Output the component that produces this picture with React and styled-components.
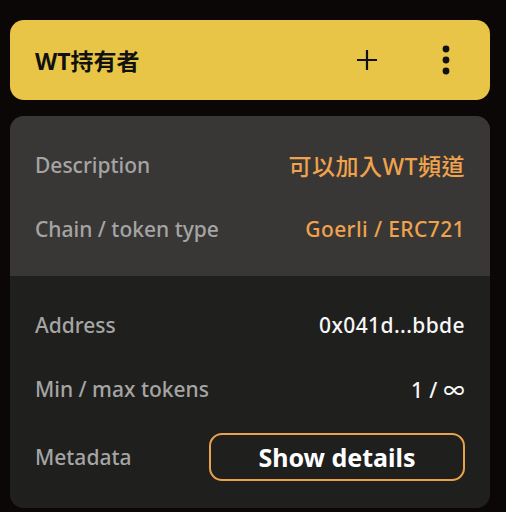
import React from 'react';
import styled, { createGlobalStyle } from 'styled-components';

const GlobalStyle = createGlobalStyle`
  html, body {
    margin: 0;
    padding: 0;
    background: #0a0706;
  }
  body {
    font-family: "Noto Sans", "Noto Sans CJK TC", sans-serif;
  }
`;

const Page = styled.div`
  width: 506px;
  height: 512px;
  padding: 20px 16px 0 10px;
  box-sizing: border-box;
  display: flex;
  flex-direction: column;
  gap: 16px;
`;

const Header = styled.div`
  height: 80px;
  background: #e8c546;
  border-radius: 14px;
  display: flex;
  align-items: center;
  padding: 0 38px 0 25px;
`;

const Title = styled.h1`
  flex: 1;
  margin: 0;
  font-size: 23px;
  font-weight: 700;
  color: #111;
  font-family: "Noto Sans", "Noto Sans CJK TC", sans-serif;
`;

const IconButton = styled.button`
  border: 0;
  background: none;
  padding: 0;
  display: flex;
  align-items: center;
  justify-content: center;
  color: #111;
  margin-left: ${p => p.gap || 0}px;
`;

const Card = styled.div`
  border-radius: 14px;
  overflow: hidden;
  background: #1f1f1e;
  height: 392px;
`;

const Section = styled.div`
  background: ${p => (p.light ? '#383736' : '#1f1f1e')};
  padding: 17px 25px 15px;
  display: flex;
  flex-direction: column;
`;

const Row = styled.div`
  height: ${p => p.tall ? 72 : 64}px;
  display: flex;
  align-items: center;
  justify-content: space-between;
`;

const Label = styled.span`
  color: #a5a5a4;
  font-size: 21px;
  font-weight: 500;
`;

const Value = styled.span`
  color: ${p => (p.accent ? '#f0a24c' : '#f7f7f7')};
  font-size: 21px;
  font-weight: 500;
  letter-spacing: 0.4px;
`;

const CjkValue = styled(Value)`
  font-size: 23px;
  letter-spacing: 0.5px;
`;

const DetailsButton = styled.button`
  width: 256px;
  height: 48px;
  box-sizing: border-box;
  border: 2px solid #e9a24b;
  border-radius: 13px;
  background: transparent;
  color: #fff;
  font-family: "Noto Sans", sans-serif;
  font-size: 25px;
  font-weight: 700;
  cursor: pointer;
`;

export default function App() {
  return (
    <>
      <GlobalStyle />
      <Page>
        <Header>
          <Title>WT持有者</Title>
          <IconButton aria-label="add">
            <svg width="22" height="22" viewBox="0 0 22 22">
              <path d="M11 1v20M1 11h20" stroke="#111" strokeWidth="2.2" fill="none" />
            </svg>
          </IconButton>
          <IconButton aria-label="more" gap={62}>
            <svg width="12" height="30" viewBox="0 0 12 30">
              <circle cx="6" cy="4" r="3.4" fill="#111" />
              <circle cx="6" cy="15" r="3.4" fill="#111" />
              <circle cx="6" cy="26" r="3.4" fill="#111" />
            </svg>
          </IconButton>
        </Header>
        <Card>
          <Section light>
            <Row>
              <Label>Description</Label>
              <CjkValue accent>可以加入WT頻道</CjkValue>
            </Row>
            <Row>
              <Label>Chain / token type</Label>
              <Value accent>Goerli / ERC721</Value>
            </Row>
          </Section>
          <Section>
            <Row>
              <Label>Address</Label>
              <Value>0x041d...bbde</Value>
            </Row>
            <Row>
              <Label>Min / max tokens</Label>
              <Value>1 / ∞</Value>
            </Row>
            <Row tall>
              <Label>Metadata</Label>
              <DetailsButton>Show details</DetailsButton>
            </Row>
          </Section>
        </Card>
      </Page>
    </>
  );
}
